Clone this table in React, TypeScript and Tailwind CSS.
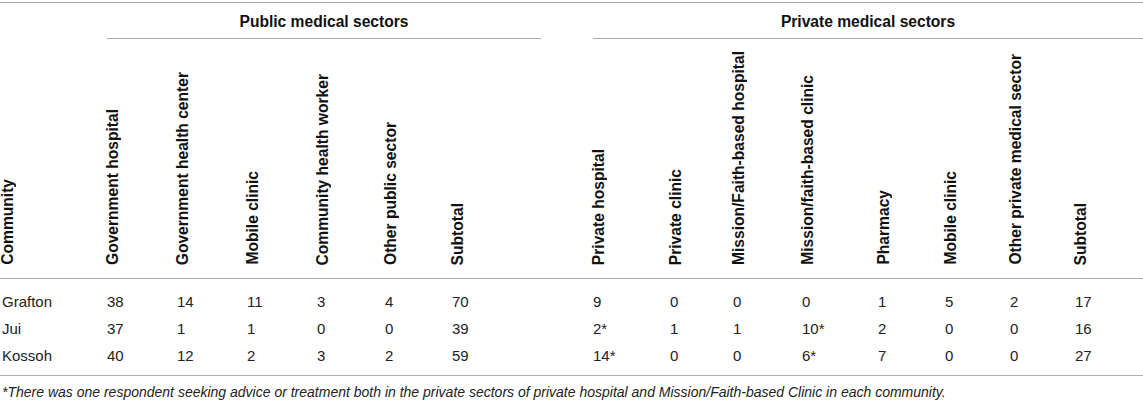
import React from "react";

const cols =
  "grid grid-cols-[105px_70px_70px_70px_68px_67px_89px_52px_77px_63px_69px_76px_67px_65px_65px_68px]";

const headers: (string | null)[] = [
  "Community",
  "Government hospital",
  "Government health center",
  "Mobile clinic",
  "Community health worker",
  "Other public sector",
  "Subtotal",
  null,
  "Private hospital",
  "Private clinic",
  "Mission/Faith-based hospital",
  "Mission/faith-based clinic",
  "Pharmacy",
  "Mobile clinic",
  "Other private medical sector",
  "Subtotal",
];

const rows: string[][] = [
  ["Grafton", "38", "14", "11", "3", "4", "70", "", "9", "0", "0", "0", "1", "5", "2", "17"],
  ["Jui", "37", "1", "1", "0", "0", "39", "", "2*", "1", "1", "10*", "2", "0", "0", "16"],
  ["Kossoh", "40", "12", "2", "3", "2", "59", "", "14*", "0", "0", "6*", "7", "0", "0", "27"],
];

export default function App() {
  return (
    <div className="w-[1143px] h-[403px] bg-white overflow-hidden pt-[2px] font-['Liberation_Sans',Arial,sans-serif] text-[#111]">
      <div className="border-t border-[#acacac]">
        {/* group header row */}
        <div className={`${cols} pl-[2px] h-[36px]`}>
          <div />
          <div className="col-span-6 border-b border-[#acacac] flex items-center justify-center text-[15.6px] font-bold leading-none pt-[3px]">
            Public medical sectors
          </div>
          <div />
          <div className="col-span-8 border-b border-[#acacac] flex items-center justify-center text-[15.6px] font-bold leading-none pt-[3px]">
            Private medical sectors
          </div>
        </div>
        {/* rotated header row */}
        <div className={`${cols} pl-[2px] h-[240px] border-b border-[#acacac]`}>
          {headers.map((h, i) => (
            <div key={i} className="flex items-end pb-[13px] -ml-[3px]">
              {h && (
                <span className="[writing-mode:vertical-rl] rotate-180 text-[15.6px] font-bold leading-[18px] whitespace-nowrap">
                  {h}
                </span>
              )}
            </div>
          ))}
        </div>
        {/* data rows */}
        <div className="pt-[9px] pb-[6px] border-b border-[#acacac]">
          {rows.map((r, ri) => (
            <div key={ri} className={`${cols} pl-[2px] h-[27px] items-center`}>
              {r.map((c, ci) => (
                <div key={ci} className="text-[15px] leading-[17px] text-[#222]">
                  {c}
                </div>
              ))}
            </div>
          ))}
        </div>
        <div className="pl-[2px] pt-[8px] text-[14px] leading-[16px] italic text-[#222]">
          *There was one respondent seeking advice or treatment both in the private sectors of private hospital and Mission/Faith-based Clinic in each community.
        </div>
      </div>
    </div>
  );
}
